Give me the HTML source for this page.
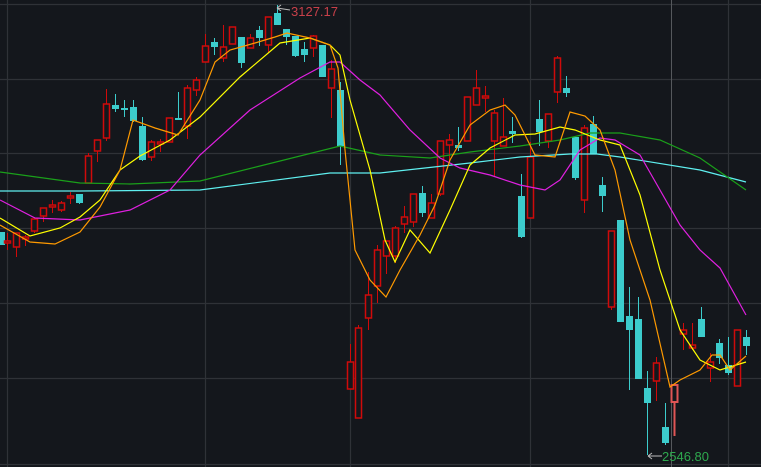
<!DOCTYPE html>
<html><head><meta charset="utf-8"><style>
html,body{margin:0;padding:0;background:#14171c;width:761px;height:467px;overflow:hidden}
svg{display:block}
</style></head><body>
<svg id="s" width="761" height="467" viewBox="0 0 761 467" xmlns="http://www.w3.org/2000/svg">
<rect width="761" height="467" fill="#14171c"/>
<g stroke="#2f3237" stroke-width="1.2">
<line x1="0" y1="4.5" x2="761" y2="4.5"/><line x1="0" y1="79.5" x2="761" y2="79.5"/>
<line x1="0" y1="153.5" x2="761" y2="153.5"/><line x1="0" y1="228.5" x2="761" y2="228.5"/>
<line x1="0" y1="303.5" x2="761" y2="303.5"/><line x1="0" y1="378.5" x2="761" y2="378.5"/>
<line x1="0" y1="464.5" x2="761" y2="464.5"/>
<line x1="7.5" y1="0" x2="7.5" y2="467"/><line x1="205.5" y1="0" x2="205.5" y2="467"/>
<line x1="350.5" y1="0" x2="350.5" y2="467"/><line x1="530.5" y1="0" x2="530.5" y2="467"/>
<line x1="728.5" y1="0" x2="728.5" y2="467"/>
</g>
<line x1="671.5" y1="0" x2="671.5" y2="467" stroke="#55585c" stroke-width="1"/>
<g id="c"></g>
<g id="m" fill="none" stroke-width="1.2"></g>
<g stroke="#bbb" stroke-width="1" fill="none"><path d="M277 8 L290 10 M277 8 l4 -3 M277 8 l4 3"/><path d="M648 456 H662 M648 456 l4 -3 M648 456 l4 3"/></g>
<text x="291" y="16" font-family="Liberation Sans, sans-serif" font-size="13" fill="#c8404a">3127.17</text>
<text x="662" y="461" font-family="Liberation Sans, sans-serif" font-size="13" fill="#2ea84e">2546.80</text>
</svg>
<script>
var C=[
[1,'c',232,245,232,245],[7,'r',241,243,233,250],[16,'r',233,247,233,257],[25,'r',237,239,235,246],[34,'r',219,231,217,233],
[43,'r',208,216,208,222],[52,'r',205,207,200,213],[61,'r',203,210,201,212],[70,'r',196,198,192,204],[79,'c',194,203,194,204],
[88,'r',156,183,153,183],[97,'r',140,151,140,162],[106,'r',104,138,89,141],[115,'c',105,109,94,112],[124,'c',108,110,100,117],
[133,'c',107,121,100,122],[142,'c',126,160,117,161],[151,'r',142,157,140,161],[160,'r',142,144,139,152],[169,'r',118,142,118,142],
[178,'c',118,120,92,120],[187,'r',88,126,85,139],[196,'r',80,90,77,96],[205,'r',46,62,34,62],[214,'c',42,47,38,55],
[223,'r',47,58,25,62],[232,'r',27,44,27,44],[241,'c',37,63,37,68],[250,'r',38,48,34,48],[259,'c',30,38,26,46],
[268,'r',17,45,17,53],[277,'c',13,25,5,25],[286,'c',29,37,29,45],[295,'c',36,56,36,57],[304,'c',49,55,42,62],
[313,'r',36,48,35,57],[322,'c',45,77,45,77],[331,'r',69,88,60,118],[340,'c',90,146,82,165],[350,'r',362,389,344,389],
[358,'r',328,418,325,418],[368,'r',295,318,272,330],[377,'r',250,286,245,303],[386,'r',241,256,241,274],[395,'r',228,256,226,263],
[404,'r',217,224,206,233],[413,'r',194,222,194,227],[422,'c',193,213,186,217],[431,'r',203,218,194,218],[440,'r',141,194,141,196],
[449,'r',140,145,134,161],[458,'c',145,148,127,151],[467,'r',97,141,97,141],[476,'r',88,105,70,105],[485,'r',96,98,86,112],
[494,'r',113,141,110,177],[503,'r',137,146,98,146],[512,'c',131,134,117,143],[521,'c',196,237,174,238],[530,'r',157,218,142,218],
[539,'c',119,132,100,146],[548,'r',114,141,114,148],[557,'r',58,92,56,103],[566,'c',88,93,76,97],[575,'c',137,178,137,180],
[584,'r',128,200,125,213],[593,'c',124,154,116,154],[602,'c',185,196,177,212],[611,'r',231,307,231,310],[620,'c',220,322,220,322],
[629,'c',316,330,287,390],[638,'c',319,379,297,379],[647,'c',388,403,371,455],[656,'r',363,381,357,401],[665,'c',427,443,403,445],
[674,'p',385,402,385,436],[683,'r',330,334,323,350],[692,'r',345,348,323,350],[701,'c',319,337,307,337],[710,'r',362,368,353,382],
[719,'c',343,358,339,364],[728,'c',365,373,337,375],[737,'r',330,386,330,386],[746,'c',337,346,330,355]];
var h='';
C.forEach(function(k){var x=k[0],t=k[1],a=k[2],b=k[3],hi=k[4],lo=k[5];
var col=t=='c'?'#3ccccc':(t=='p'?'#e05555':'#d00a0a');
h+='<line x1="'+(x+.5)+'" y1="'+hi+'" x2="'+(x+.5)+'" y2="'+lo+'" stroke="'+col+'" stroke-width="'+(t=='p'?2:1)+'"/>';
var bh=Math.max(b-a,1.5);
if(t=='c')h+='<rect x="'+(x-3)+'" y="'+a+'" width="7" height="'+bh+'" fill="'+col+'"/>';
else h+='<rect x="'+(x-2.5)+'" y="'+a+'" width="6" height="'+bh+'" fill="#14171c" stroke="'+col+'" stroke-width="'+(t=='p'?2:1.5)+'"/>';
});
document.getElementById('c').innerHTML=h;
var M=[
['#5ff0f0',[[0,191],[80,191],[200,190],[330,173],[380,173],[470,163],[520,157],[570,154],[597,154],[620,157],[700,170],[746,182]]],
['#1aa01a',[[0,172],[80,183],[130,184],[200,181],[260,166],[340,146],[380,155],[430,158],[470,152],[520,146],[560,140],[590,133],[620,133],[660,140],[700,158],[746,190]]],
['#e020e0',[[0,200],[35,218],[80,220],[130,210],[170,190],[200,155],[250,110],[300,78],[330,62],[340,62],[360,80],[380,95],[410,130],[440,158],[460,168],[490,175],[520,185],[545,190],[560,180],[580,150],[600,138],[615,140],[640,155],[680,225],[700,250],[720,268],[746,315]]],
['#ffff00',[[0,218],[30,236],[60,228],[80,217],[100,200],[120,170],[140,156],[170,140],[200,117],[240,77],[280,43],[310,38],[330,45],[340,55],[350,100],[370,170],[385,240],[395,262],[410,230],[430,253],[450,210],[470,165],[490,148],[515,135],[535,134],[560,127],[575,130],[600,140],[620,145],[640,195],[660,270],[680,330],[700,360],[720,370],[746,362]]],
['#ff9a00',[[0,225],[30,242],[55,244],[80,232],[100,207],[120,170],[133,120],[155,128],[178,135],[200,100],[215,62],[230,50],[255,43],[275,37],[287,33],[310,38],[330,45],[338,68],[345,150],[355,250],[370,280],[386,297],[400,270],[420,235],[435,205],[450,160],[470,125],[490,110],[505,105],[515,115],[525,135],[535,155],[555,157],[570,112],[585,116],[600,130],[615,170],[630,240],[650,300],[670,387],[680,380],[700,370],[712,355],[720,355],[730,370],[746,356]]]];
var g='';M.forEach(function(m){g+='<polyline stroke="'+m[0]+'" points="'+m[1].map(function(p){return p.join(',')}).join(' ')+'"/>';});
document.getElementById('m').innerHTML=g;
</script>
</body></html>
